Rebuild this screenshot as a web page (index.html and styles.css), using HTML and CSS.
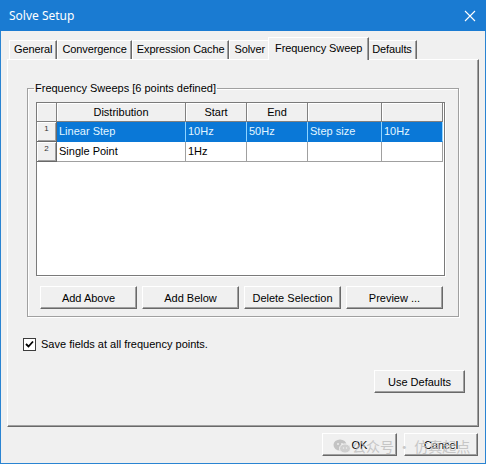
FILE: index.html
```html
<!DOCTYPE html>
<html lang="en">
<head>
  <meta charset="UTF-8">
  <title>Solve Setup</title>
  <link rel="stylesheet" href="styles.css">
</head>
<body>
  <div class="window">
    <div class="titlebar">
      <span class="title">Solve Setup</span>
      <svg class="close" width="12" height="12" viewBox="0 0 12 12">
        <path d="M1 1 L11 11 M11 1 L1 11" stroke="#fff" stroke-width="1.1" fill="none"/>
      </svg>
    </div>

    <div class="client">
      <div class="tabs">
        <div class="tab">General</div>
        <div class="tab">Convergence</div>
        <div class="tab">Expression Cache</div>
        <div class="tab">Solver</div>
        <div class="tab active">Frequency Sweep</div>
        <div class="tab">Defaults</div>
      </div>

      <div class="panel">
        <fieldset class="group">
          <legend>Frequency Sweeps [6 points defined]</legend>
          <div class="sheet">
            <div class="cell corner"></div>
            <div class="cell head">Distribution</div>
            <div class="cell head">Start</div>
            <div class="cell head">End</div>
            <div class="cell head"></div>
            <div class="cell head"></div>

            <div class="cell rowhead">1</div>
            <div class="cell selected">Linear Step</div>
            <div class="cell selected">10Hz</div>
            <div class="cell selected">50Hz</div>
            <div class="cell selected">Step size</div>
            <div class="cell selected">10Hz</div>

            <div class="cell rowhead">2</div>
            <div class="cell">Single Point</div>
            <div class="cell">1Hz</div>
            <div class="cell"></div>
            <div class="cell"></div>
            <div class="cell"></div>
          </div>
          <div class="grid-buttons">
            <button class="btn">Add Above</button>
            <button class="btn">Add Below</button>
            <button class="btn">Delete Selection</button>
            <button class="btn">Preview ...</button>
          </div>
        </fieldset>

        <label class="check">
          <span class="box">
            <svg width="9" height="9" viewBox="0 0 9 9">
              <path d="M1 4 L3.5 6.5 L8 1.5" stroke="#000" stroke-width="1.8" fill="none"/>
            </svg>
          </span>
          Save fields at all frequency points.
        </label>

        <div class="panel-actions">
          <button class="btn defaults">Use Defaults</button>
        </div>
      </div>

      <div class="dialog-actions">
        <button class="btn ok">OK</button>
        <button class="btn cancel">Cancel</button>
        <span class="watermark">
          <svg width="18" height="15" viewBox="0 0 18 15">
            <ellipse cx="7" cy="6" rx="6.5" ry="5.5" fill="#b8b8b8"/>
            <ellipse cx="12" cy="9.5" rx="5.5" ry="4.6" fill="#c8c8c8" stroke="#f0f0f0" stroke-width="1"/>
            <circle cx="5" cy="5" r="0.9" fill="#f0f0f0"/>
            <circle cx="9" cy="5" r="0.9" fill="#f0f0f0"/>
            <circle cx="10.5" cy="9" r="0.7" fill="#f0f0f0"/>
            <circle cx="13.5" cy="9" r="0.7" fill="#f0f0f0"/>
          </svg>
          <span class="wm-text">公众号 · 仿真起点</span>
        </span>
      </div>
    </div>
  </div>
</body>
</html>
```

FILE: styles.css
```css
body {
  margin: 0;
  background: #f0f0f0;
  font-family: "Liberation Sans", Arial, sans-serif;
  font-size: 11px;
  color: #000;
}
.window {
  width: 486px;
  height: 464px;
  box-sizing: border-box;
  border: 1px solid #2a84d2;
  border-top: none;
  background: #f0f0f0;
}
.titlebar {
  height: 31px;
  margin: 0 -1px;
  background: #1a7bd2;
  color: #fff;
  display: flex;
  align-items: center;
  justify-content: space-between;
  padding: 0 10px 0 9px;
}
.title {
  font-family: "Noto Sans", "Liberation Sans", sans-serif;
  font-size: 12px;
}
.close {
  display: block;
}
.client {
  padding: 6px 6px 0;
}
.tabs {
  display: flex;
  align-items: flex-end;
  height: 22px;
  margin-left: 2px;
}
.tab {
  height: 19px;
  box-sizing: border-box;
  line-height: 17px;
  padding: 0 4px;
  border-top: 1px solid #fff;
  border-left: 1px solid #fff;
  border-right: 1px solid #696969;
  box-shadow: inset -1px 0 #a0a0a0;
  white-space: nowrap;
  letter-spacing: -0.1px;
}
.tab.active {
  position: relative;
  z-index: 1;
  height: 23px;
  margin: 0 -2px -1px;
  padding: 0 6px 2px;
  line-height: 20px;
  background: #f0f0f0;
}
.panel {
  height: 368px;
  box-sizing: border-box;
  padding-top: 22px;
  border-top: 1px solid #fff;
  border-left: 1px solid #fff;
  border-right: 1px solid #696969;
  border-bottom: 1px solid #696969;
  box-shadow: inset -1px -1px #a0a0a0;
}
.group {
  margin: 0 19px;
  height: 235px;
  box-sizing: border-box;
  padding: 0 13px 7px 0;
  border: 1px solid #a0a0a0;
  box-shadow: inset 1px 1px #fff, 1px 1px #fff;
}
.group legend {
  margin-left: 6px;
  padding: 0 1px;
  line-height: 13px;
}
.sheet {
  margin: 7px 0 0 8px;
  height: 174px;
  box-sizing: border-box;
  border: 1px solid #7a7a7a;
  box-shadow: 1px 1px #fff;
  background: #fff;
  display: grid;
  grid-template-columns: 20px 129px 61px 61px 74px 61px;
  grid-template-rows: 19px 20px 20px;
  align-content: start;
}
.cell {
  box-sizing: border-box;
  border-right: 1px solid #a0a0a0;
  border-bottom: 1px solid #a0a0a0;
  padding-left: 2px;
  line-height: 19px;
  white-space: nowrap;
  overflow: hidden;
}
.corner,
.head {
  background: #f0f0f0;
  border-color: #808080;
  box-shadow: inset 1px 1px #fff;
  text-align: center;
  padding: 0;
  line-height: 18px;
}
.rowhead {
  background: #f0f0f0;
  border-color: #696969;
  box-shadow: inset 1px 1px #fff, inset -1px -1px #a0a0a0;
  text-align: center;
  padding: 2px 0 0;
  font-size: 8px;
  line-height: 9px;
  color: #333;
}
.selected {
  background: #0a78d7;
  color: #e2f6ff;
  border-right-color: #8fd4ff;
  border-bottom-color: #0a78d7;
}
.grid-buttons {
  display: flex;
  gap: 5px;
  margin: 10px 0 0 12px;
}
.btn {
  height: 23px;
  box-sizing: border-box;
  padding: 0;
  background: #f0f0f0;
  border: 1px solid;
  border-color: #fff #696969 #696969 #fff;
  box-shadow: inset -1px -1px #a0a0a0;
  font-family: inherit;
  font-size: 11px;
  color: #000;
}
.grid-buttons .btn {
  width: 97px;
}
.check {
  display: flex;
  align-items: center;
  gap: 5px;
  margin: 21px 0 0 15px;
  line-height: 13px;
}
.box {
  width: 13px;
  height: 13px;
  box-sizing: border-box;
  border: 1px solid #3c3c3c;
  background: #fff;
  display: flex;
  align-items: center;
  justify-content: center;
}
.box svg {
  display: block;
}
.panel-actions {
  display: flex;
  justify-content: flex-end;
  margin: 19px 13px 0 0;
}
.defaults {
  width: 91px;
}
.dialog-actions {
  position: relative;
  display: flex;
  justify-content: flex-end;
  gap: 7px;
  margin: 6px 1px 0 0;
}
.ok {
  width: 75px;
}
.cancel {
  width: 74px;
}
.watermark {
  position: absolute;
  left: 326px;
  top: 3px;
  display: flex;
  align-items: center;
  gap: 1px;
  white-space: nowrap;
  opacity: 0.8;
  pointer-events: none;
}
.wm-text {
  font-family: "Noto Sans CJK SC", sans-serif;
  font-size: 14px;
  color: #bcbcbc;
}
```
